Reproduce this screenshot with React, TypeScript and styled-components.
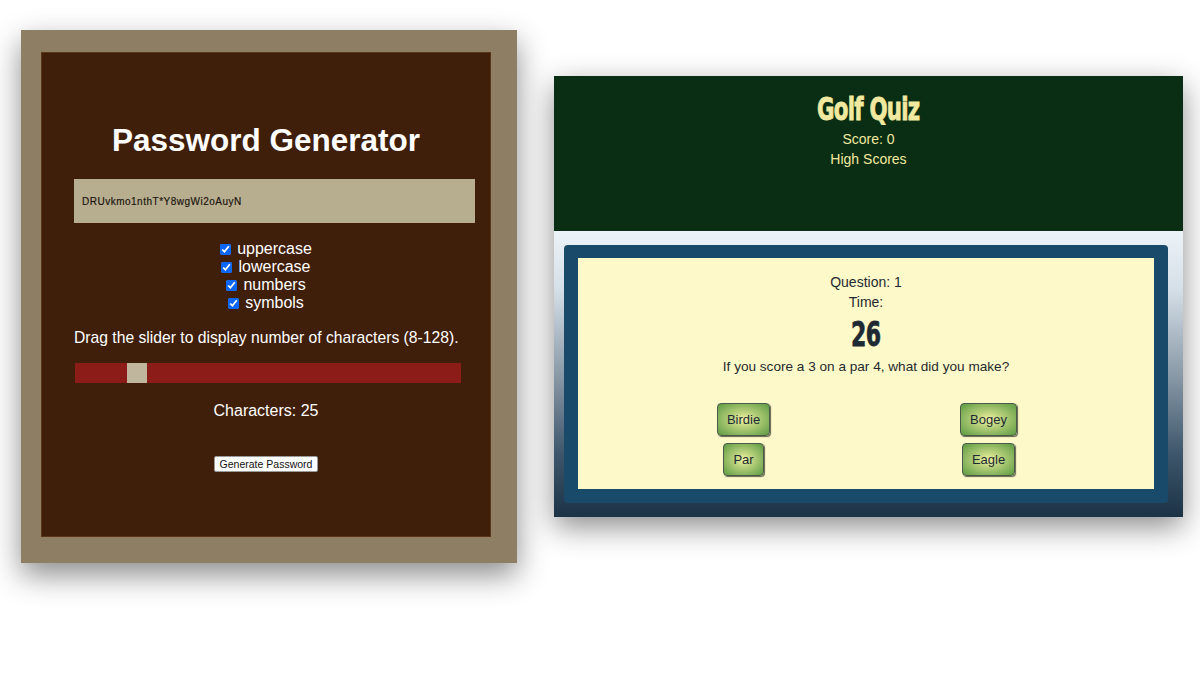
import styled, { createGlobalStyle } from 'styled-components'

const Global = createGlobalStyle`
  body {
    margin: 0;
    background: #ffffff;
    font-family: 'Liberation Sans', Arial, sans-serif;
  }
`

const Page = styled.main`
  display: flex;
  align-items: flex-start;
  gap: 37px;
  padding: 30px 0 0 21px;
  height: 700px;
  box-sizing: border-box;
`

/* ---------- password generator ---------- */

const Frame = styled.section`
  width: 496px;
  height: 533px;
  box-sizing: border-box;
  padding: 23px 27px 27px 21px;
  background: #8e7f64;
  box-shadow: 0 12px 28px rgba(0, 0, 0, 0.45);
`

const Card = styled.div`
  height: 100%;
  background: #3f1e0a;
  box-shadow: 0 0 0 1px #5a3516;
  display: flex;
  flex-direction: column;
  align-items: center;
  padding-top: 69px;
  box-sizing: border-box;
  color: #ffffff;
`

const Heading = styled.h1`
  margin: 0;
  font-size: 31.5px;
  font-weight: 700;
  line-height: 36px;
`

const Output = styled.div`
  align-self: stretch;
  margin: 21px 15px 0 32px;
  height: 44px;
  background: #b7ae8f;
  color: #17120c;
  font-size: 10px;
  letter-spacing: 0.5px;
  display: flex;
  align-items: center;
  padding-left: 8px;
  -webkit-text-stroke: 0.15px #17120c;
`

const Options = styled.div`
  margin-top: 17px;
  display: flex;
  flex-direction: column;
  align-items: center;
`

const Option = styled.label`
  display: flex;
  align-items: center;
  font-size: 16px;
  line-height: 18px;

  input {
    width: 11px;
    height: 11px;
    margin: 0 6px 0 0;
    accent-color: #0a66f4;
  }
`

const Hint = styled.p`
  margin: 17px 0 0 32px;
  font-size: 15.7px;
  line-height: 18px;
  align-self: stretch;
`

const Track = styled.div`
  align-self: stretch;
  margin: 16px 29px 0 33px;
  height: 20px;
  background: #8b1c18;
  display: flex;
`

const Thumb = styled.div`
  width: 20px;
  height: 100%;
  background: #c0b59d;
`

const Count = styled.p`
  margin: 19px 0 0;
  font-size: 16px;
  line-height: 18px;
`

const SmallButton = styled.button`
  margin-top: 36px;
  font-family: 'Liberation Sans', Arial, sans-serif;
  font-size: 10.5px;
  padding: 0 5px;
  height: 16px;
  line-height: 12px;
  background: #ffffff;
  color: #111;
  border: 1px solid #9a9a9a;
  border-radius: 2px;
`

/* ---------- golf quiz ---------- */

const Quiz = styled.section`
  margin-top: 46px;
  width: 629px;
  height: 441px;
  display: flex;
  flex-direction: column;
  box-shadow: 0 10px 28px rgba(0, 0, 0, 0.45);
`

const Header = styled.header`
  height: 155px;
  background: #0a2e13;
  color: #f1e9a0;
  display: flex;
  flex-direction: column;
  align-items: center;
  padding-top: 15px;
  box-sizing: border-box;
`

const Impact = styled.span`
  font-family: 'DejaVu Sans Condensed', 'Liberation Sans Narrow', sans-serif;
  font-weight: 700;
  display: inline-block;
  transform: scaleX(0.74);
  letter-spacing: -1px;
`

const QuizTitle = styled(Impact)`
  font-size: 32px;
  line-height: 36px;
  -webkit-text-stroke: 0.8px #f1e9a0;
`

const Line = styled.div<{ $gap?: number }>`
  font-size: 14px;
  line-height: 16px;
  margin-top: ${p => p.$gap ?? 4}px;
`

const Field = styled.div`
  flex: 1;
  background: linear-gradient(180deg, #ecf3f8 0%, #d6e0e8 20%, #8a9aa8 50%, #3d566b 78%, #1c3346 100%);
  padding: 14px 15px 14px 10px;
`

const Board = styled.div`
  height: 100%;
  background: #1a4a69;
  border-radius: 4px;
  padding: 13px 14px 14px 14px;
  box-sizing: border-box;
`

const Sheet = styled.div`
  height: 100%;
  background: #fef9c9;
  color: #1e2a2f;
  display: flex;
  flex-direction: column;
  align-items: center;
  padding-top: 16px;
  box-sizing: border-box;
`

const Timer = styled(Impact)`
  font-size: 33px;
  line-height: 36px;
  margin-top: 7px;
  color: #1e2a33;
  -webkit-text-stroke: 0.8px #1e2a33;
`

const Question = styled(Line)`
  font-size: 13.6px;
`

const Choices = styled.div`
  margin-top: 28px;
  display: grid;
  grid-template-columns: 245px 245px;
  row-gap: 7px;
  justify-items: center;
`

const Choice = styled.button`
  height: 33px;
  padding: 0 9px;
  font-family: 'Liberation Sans', Arial, sans-serif;
  font-size: 13px;
  color: #1c2b33;
  background: radial-gradient(ellipse at center, #f3f2a4 0%, #b9d17c 35%, #5c9a42 100%);
  border: 1px solid #4a5a4a;
  border-radius: 4px;
  box-shadow: 1px 1px 1px rgba(0, 0, 0, 0.6);
`

const answers = ['Birdie', 'Bogey', 'Par', 'Eagle']
const options = ['uppercase', 'lowercase', 'numbers', 'symbols']

export default function App() {
  return (
    <>
      <Global />
      <Page>
        <Frame>
          <Card>
            <Heading>Password Generator</Heading>
            <Output>DRUvkmo1nthT*Y8wgWi2oAuyN</Output>
            <Options>
              {options.map(o => (
                <Option key={o}>
                  <input type="checkbox" defaultChecked />
                  {o}
                </Option>
              ))}
            </Options>
            <Hint>Drag the slider to display number of characters (8-128).</Hint>
            <Track>
              <div style={{ width: 52 }} />
              <Thumb />
            </Track>
            <Count>Characters: 25</Count>
            <SmallButton>Generate Password</SmallButton>
          </Card>
        </Frame>

        <Quiz>
          <Header>
            <QuizTitle>Golf Quiz</QuizTitle>
            <Line $gap={4}>Score: 0</Line>
            <Line>High Scores</Line>
          </Header>
          <Field>
            <Board>
              <Sheet>
                <Line $gap={0}>Question: 1</Line>
                <Line>Time:</Line>
                <Timer>26</Timer>
                <Question $gap={6}>If you score a 3 on a par 4, what did you make?</Question>
                <Choices>
                  {answers.map(a => (
                    <Choice key={a}>{a}</Choice>
                  ))}
                </Choices>
              </Sheet>
            </Board>
          </Field>
        </Quiz>
      </Page>
    </>
  )
}
